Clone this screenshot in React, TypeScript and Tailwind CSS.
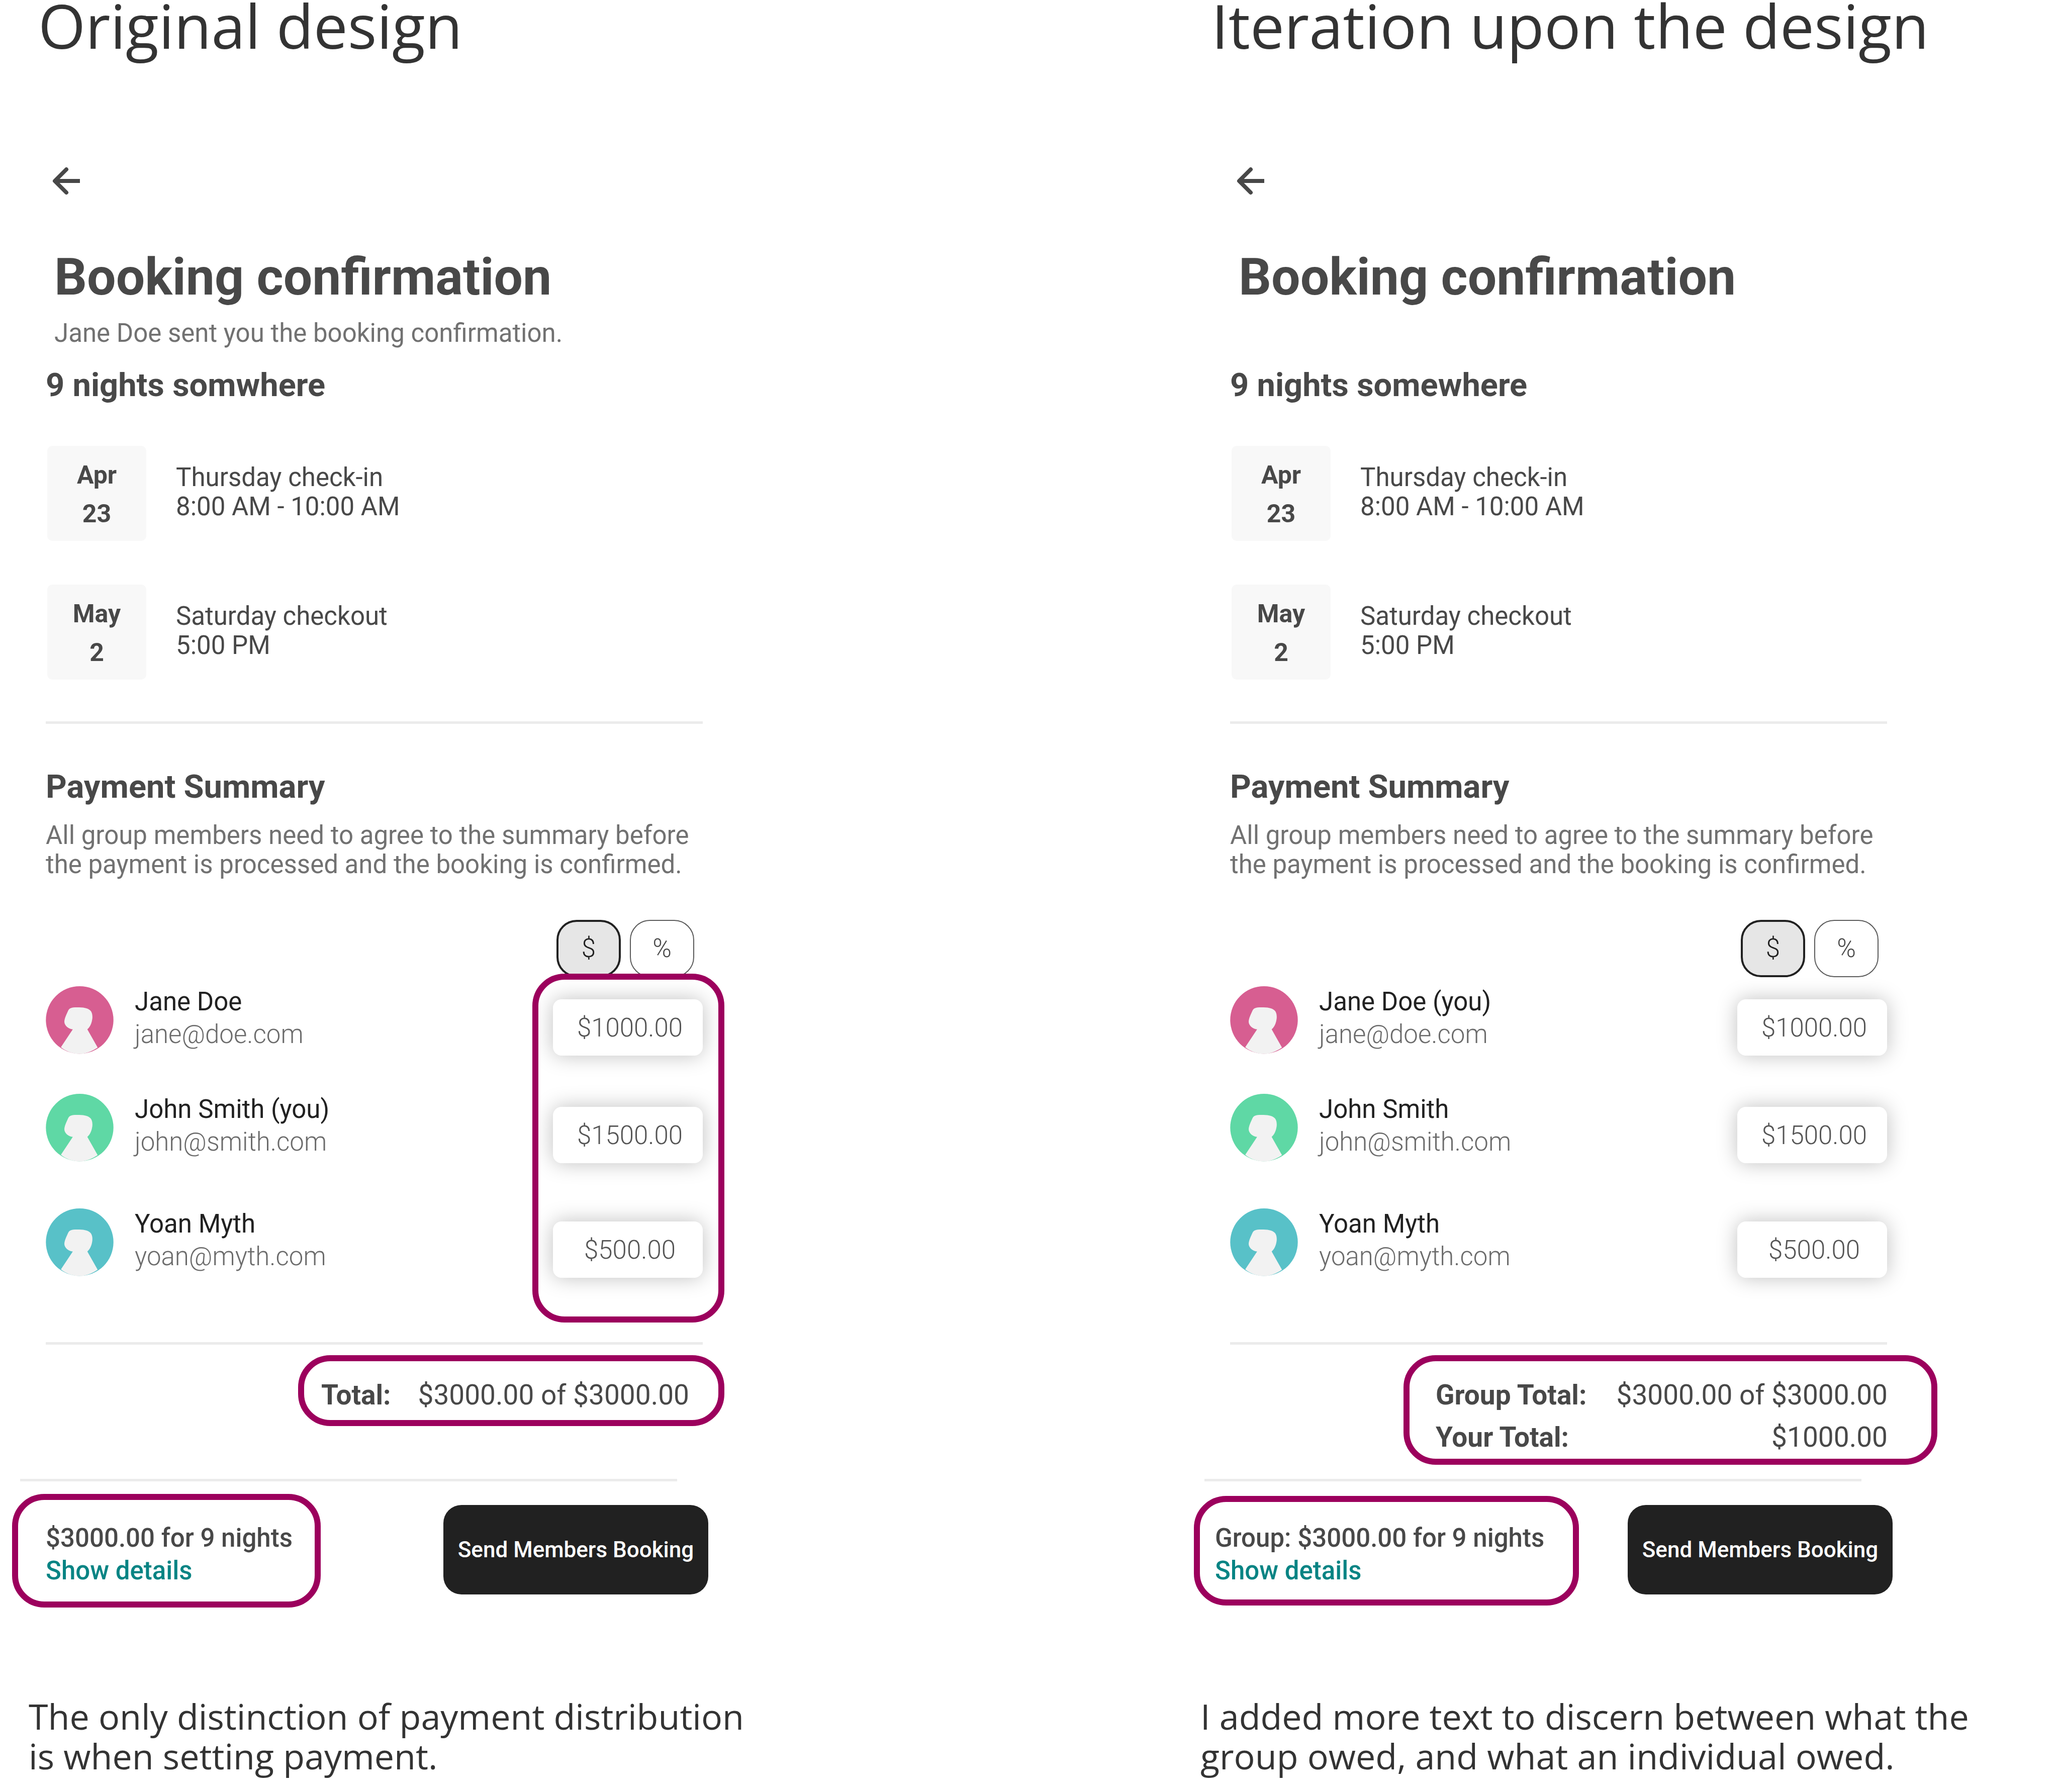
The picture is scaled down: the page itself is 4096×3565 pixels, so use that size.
type Member = { name: string; email: string; amount: string; color: string; spacing: string };

type Design = {
  id: string;
  title: string;
  titleInset: string;
  note?: string;
  stay: string;
  members: Member[];
  markAmounts: boolean;
  totals: { label: string; value: string }[];
  totalsBox: string;
  price: string;
  priceBox: string;
  caption: string;
  captionBox: string;
};

const designs: Design[] = [
  {
    id: "original",
    title: "Original design",
    titleInset: "pl-[76px]",
    note: "Jane Doe sent you the booking confirmation.",
    stay: "9 nights somwhere",
    members: [
      { name: "Jane Doe", email: "jane@doe.com", amount: "$1000.00", color: "#d75e91", spacing: "mt-0" },
      { name: "John Smith (you)", email: "john@smith.com", amount: "$1500.00", color: "#5fd8a5", spacing: "mt-[74px]" },
      { name: "Yoan Myth", email: "yoan@myth.com", amount: "$500.00", color: "#58c1c8", spacing: "mt-[88px]" },
    ],
    markAmounts: true,
    totals: [{ label: "Total:", value: "$3000.00 of $3000.00" }],
    totalsBox: "-mr-[43px] w-[848px] pt-[25px] pr-[58px] pb-[8px] pl-[34px]",
    price: "$3000.00 for 9 nights",
    priceBox: "-ml-[67px] w-[614px] pt-[43px] pb-[29px] pl-[55px]",
    caption: "The only distinction of payment distribution is when setting payment.",
    captionBox: "ml-[57px] max-w-[1460px]",
  },
  {
    id: "iteration",
    title: "Iteration upon the design",
    titleInset: "pl-[54px]",
    stay: "9 nights somewhere",
    members: [
      { name: "Jane Doe (you)", email: "jane@doe.com", amount: "$1000.00", color: "#d75e91", spacing: "mt-0" },
      { name: "John Smith", email: "john@smith.com", amount: "$1500.00", color: "#5fd8a5", spacing: "mt-[74px]" },
      { name: "Yoan Myth", email: "yoan@myth.com", amount: "$500.00", color: "#58c1c8", spacing: "mt-[88px]" },
    ],
    markAmounts: false,
    totals: [
      { label: "Group Total:", value: "$3000.00 of $3000.00" },
      { label: "Your Total:", value: "$1000.00" },
    ],
    totalsBox: "-mr-[100px] w-[1062px] pt-[25px] pr-[87px] pb-[1px] pl-[52px]",
    price: "Group: $3000.00 for 9 nights",
    priceBox: "-ml-[72px] w-[766px] pt-[39px] pb-[25px] pl-[30px]",
    caption: "I added more text to discern between what the group owed, and what an individual owed.",
    captionBox: "ml-[32px] max-w-[1620px]",
  },
];

function BackButton() {
  return (
    <button type="button" aria-label="Back" className="mt-[232px] ml-[13px] block size-[56px]">
      <svg viewBox="0 0 56 56" className="size-full" fill="none" stroke="#484848" strokeWidth="8" strokeLinejoin="round">
        <path d="M55 28H6" />
        <path d="M28 5 5 28 28 51" strokeLinecap="round" />
      </svg>
    </button>
  );
}

function Avatar({ color }: { color: string }) {
  return (
    <svg viewBox="0 0 432 434" className="mt-[2px] h-[135px] w-[135px] shrink-0" aria-hidden="true">
      <circle cx="216" cy="216" r="216" fill={color} />
      <path
        fill="#f2f2f2"
        d="M96 390 172 276C145 273 119 252 118 228C118 207 133 177 142 157C150 140 163 135 198 135C240 135 266 138 284 155C300 170 299 203 295 218C291 242 280 262 265 276L331 392C300 413 265 428 226 433C170 434 128 417 96 390Z"
      />
    </svg>
  );
}

function StayDate({ month, day, title, time }: { month: string; day: string; title: string; time: string }) {
  return (
    <div className="flex items-start">
      <div className="w-[197px] rounded-[10px] bg-[#f8f8f8] pt-[20px] pb-[15px] text-center text-[50px] leading-[77px] font-bold">
        <p>{month}</p>
        <p>{day}</p>
      </div>
      <div className="pt-[34px] pl-[59px] text-[51px] leading-[58px]">
        <p>{title}</p>
        <p>{time}</p>
      </div>
    </div>
  );
}

function MemberRow({ member }: { member: Member }) {
  return (
    <li className={`flex items-start ${member.spacing}`}>
      <Avatar color={member.color} />
      <div className="flex-1 pl-[42px] text-[51px] leading-[65px]">
        <p className="text-[#212121]">{member.name}</p>
        <p className="font-light text-[#6b6b6b]">{member.email}</p>
      </div>
      <input
        type="text"
        defaultValue={member.amount}
        aria-label={`Amount for ${member.name}`}
        className="mt-[28px] h-[112px] w-[298px] rounded-[17px] bg-white pl-[8px] text-center text-[51px] font-light text-[#555555] shadow-[0_0_40px_rgba(0,0,0,0.25)]"
      />
    </li>
  );
}

function DesignColumn({ design }: { design: Design }) {
  return (
    <section className="font-[Roboto,sans-serif] text-[#484848]">
      <h1 className={`font-['Open_Sans',sans-serif] text-[121px] leading-[100px] text-[#333333] ${design.titleInset}`}>
        {design.title}
      </h1>

      <div className="ml-[91px] max-w-[1307px]">
        <BackButton />
        <header className="mt-[103px] min-h-[201px] pl-[17px]">
          <h2 className="text-[102px] leading-[120px] font-bold">Booking confirmation</h2>
          {design.note && <p className="mt-[23px] text-[51px] leading-[58px] text-[#717171]">{design.note}</p>}
        </header>

        <h3 className="mt-[36px] text-[65px] leading-[76px] font-bold">{design.stay}</h3>
        <div className="mt-[83px] ml-[3px] flex flex-col gap-[87px]">
          <StayDate month="Apr" day="23" title="Thursday check-in" time="8:00 AM - 10:00 AM" />
          <StayDate month="May" day="2" title="Saturday checkout" time="5:00 PM" />
        </div>

        <hr className="mt-[83px] h-[5px] border-0 bg-[#ebebeb]" />

        <h3 className="mt-[87px] text-[65px] leading-[76px] font-bold">Payment Summary</h3>
        <p className="mt-[30px] text-[51px] leading-[58px] text-[#717171]">
          All group members need to agree to the summary before the payment is processed and the booking is confirmed.
        </p>

        <div className="mt-[81px] mr-[17px] flex justify-end gap-[18px] text-[51px] font-light">
          <button type="button" aria-pressed="true" className="h-[114px] w-[128px] rounded-[40px] border-4 border-[#212121] bg-[#e6e6e6] text-[#212121]">
            $
          </button>
          <button type="button" aria-pressed="false" className="h-[114px] w-[128px] rounded-[40px] border-2 border-[#5a5a5a] bg-white">
            %
          </button>
        </div>

        <div className="relative mt-[16px]">
          <ul>
            {design.members.map((member) => (
              <MemberRow key={member.email} member={member} />
            ))}
          </ul>
          {design.markAmounts && (
            <div className="pointer-events-none absolute -top-[23px] -right-[43px] -bottom-[89px] w-[382px] rounded-[64px] border-[12px] border-[#9c005d]" />
          )}
        </div>

        <hr className="mt-[128px] h-[5px] border-0 bg-[#ebebeb]" />

        <div className="mt-[21px] flex min-h-[246px] items-start justify-end">
          <dl className={`shrink-0 rounded-[64px] border-[12px] border-[#9c005d] text-[55px] leading-[84px] ${design.totalsBox}`}>
            {design.totals.map((total) => (
              <div key={total.label} className="flex justify-between">
                <dt className="font-bold">{total.label}</dt>
                <dd>{total.value}</dd>
              </div>
            ))}
          </dl>
        </div>

        <hr className="mr-[51px] -ml-[51px] h-[5px] border-0 bg-[#ebebeb]" />

        <footer className="mt-[25px] -mr-[11px] flex min-h-[226px] items-center justify-between">
          <div className={`rounded-[64px] border-[12px] border-[#9c005d] text-[51px] leading-[65px] font-medium ${design.priceBox}`}>
            <p>{design.price}</p>
            <a href={`#${design.id}-details`} className="block text-[#088484]">
              Show details
            </a>
          </div>
          <button type="button" className="mb-[4px] h-[178px] w-[527px] rounded-[36px] bg-[#212121] text-[44px] font-medium text-white">
            Send Members Booking
          </button>
        </footer>
      </div>

      <p className={`mt-[177px] font-['Open_Sans',sans-serif] text-[70px] leading-[79px] text-[#333333] ${design.captionBox}`}>
        {design.caption}
      </p>
    </section>
  );
}

export default function App() {
  return (
    <main className="grid min-h-screen grid-cols-[2356fr_1740fr] bg-white">
      {designs.map((design) => (
        <DesignColumn key={design.id} design={design} />
      ))}
    </main>
  );
}
